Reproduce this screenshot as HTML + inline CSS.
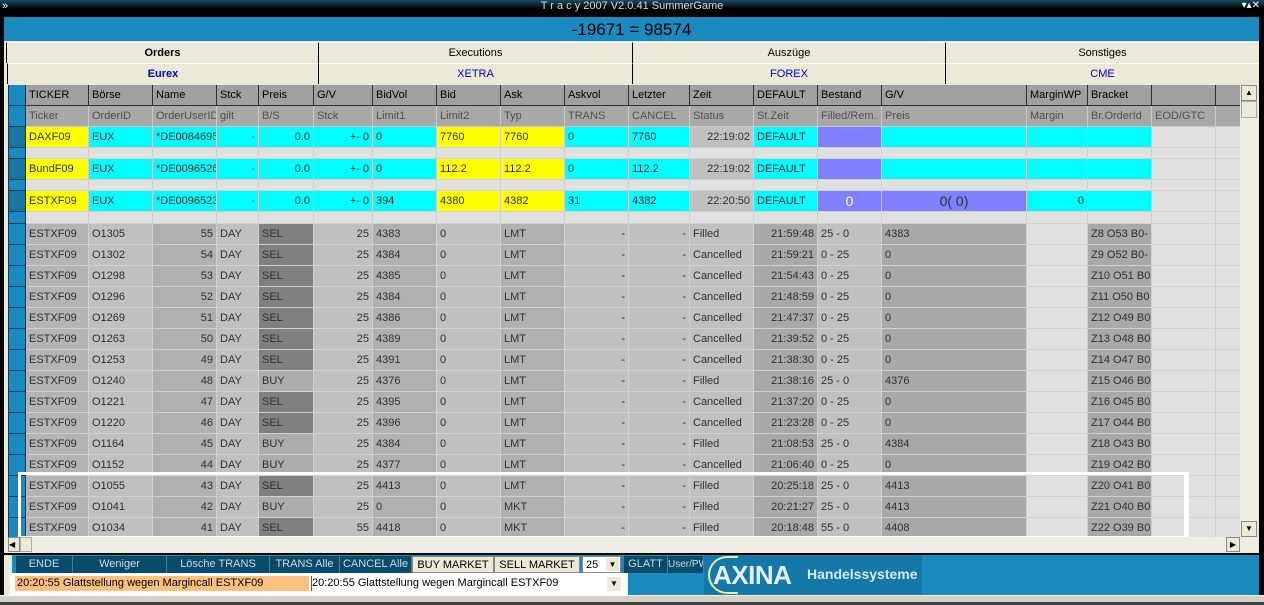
<!DOCTYPE html>
<html><head><meta charset="utf-8"><style>
*{box-sizing:border-box;margin:0;padding:0}
body{width:1264px;height:605px;overflow:hidden;background:#d4d0c8;font-family:"Liberation Sans",sans-serif;font-size:11px;position:relative}
.abs{position:absolute}
#title{left:0;top:0;width:1264px;height:15px;background:linear-gradient(#1a4a60,#000 60%,#000);color:#d8d8d8;text-align:center;font-size:11px;line-height:13px}
#frame{left:0;top:14px;width:1264px;height:581px;background:#000}
#blue{left:4px;top:17px;width:1255px;height:24px;background:#1a8ac0;text-align:center;font-size:17px;line-height:26px;color:#000}
.tabrow{height:21px;background:#ece9d8;display:flex}
.tabrow div{border-left:1px solid #000;text-align:center;line-height:20px;border-top:1px solid #fff}
#grid{left:8px;top:85px;width:1232px;height:452px;overflow:hidden;background:#e0e0e0}
table{border-collapse:collapse;table-layout:fixed;width:1232px}
td{border:1px solid #d0d0d0;height:21px;padding:0 3px;white-space:nowrap;overflow:hidden;color:#303030}
tr.h1 td{background:#a0a0a0;color:#000;border:1px solid #303030;border-top:none;height:20px}
tr.h2 td{background:#a8a8a8;color:#505050;border-color:#c8c8c8}
tr.b td{height:11px;background:#e0e0e0}
tr.c td{background:#00ffff}
tr.c td.y{background:#ffff00}
tr.c td.p{background:#8080ff}
tr.c td.gr{background:#c0c0c0}
tr.c td.e{background:#e0e0e0}
.r{text-align:right}
tr.g td{background:#c0c0c0}
tr.g td:nth-child(2){background:#b4b4b4}
tr.g td:nth-child(4),tr.g td:nth-child(8),tr.g td:nth-child(10){background:#b0b0b0;}
tr.g td:nth-child(4),tr.g td:nth-child(7),tr.g td:nth-child(11),tr.g td:nth-child(12),tr.g td:nth-child(14){text-align:right}
tr.g td:nth-child(14),tr.g td:nth-child(16),tr.g td:nth-child(18){background:#a8a8a8}
tr.g td:nth-child(17),tr.g td:nth-child(19),tr.g td:nth-child(20){background:#e0e0e0}
tr.g td.s{background:#808080}
tr.g td.bu{background:#acacac}
table tr td:first-child{background:#1a8ac0;border-color:#0a3a5a;padding:0}
table tr.c td:first-child{background:#1a75a0}
.btn{position:absolute;top:556px;height:17px;background:#0a4a6a;color:#c8dce8;text-align:center;line-height:17px;border-right:1px solid #4a7a9a;white-space:nowrap;overflow:hidden}
.lbtn{background:#ece9d8;color:#000;border:1px solid #888}
</style></head><body>
<div id="frame" class="abs"></div>
<div id="title" class="abs">T r a c y 2007 V2.0.41 SummerGame</div>
<div class="abs" style="left:2px;top:0;color:#fff;font-size:11px">»</div>
<div class="abs" style="right:4px;top:0;color:#fff;font-size:10px">▾▴✕</div>
<div id="blue" class="abs">-19671 = 98574</div>
<div class="abs" style="left:4px;top:41px;width:1255px;height:554px;background:#ece9d8"></div>
<div class="abs tabrow" style="left:6px;top:42px;width:1253px">
<div style="width:312px;font-weight:bold">Orders</div><div style="width:314px">Executions</div><div style="width:313px">Auszüge</div><div style="width:314px">Sonstiges</div></div>
<div class="abs tabrow" style="left:7px;top:63px;width:1252px;color:#0000c0">
<div style="width:311px;font-weight:bold">Eurex</div><div style="width:314px">XETRA</div><div style="width:313px">FOREX</div><div style="width:314px">CME</div></div>
<div id="grid" class="abs"><table>
<colgroup><col style="width:17px"><col style="width:63px"><col style="width:64px"><col style="width:64px"><col style="width:42px"><col style="width:55px"><col style="width:59px"><col style="width:64px"><col style="width:64px"><col style="width:64px"><col style="width:64px"><col style="width:61px"><col style="width:64px"><col style="width:64px"><col style="width:64px"><col style="width:145px"><col style="width:61px"><col style="width:64px"><col style="width:64px"><col style="width:25px"></colgroup>
<tr class="h1"><td></td><td>TICKER</td><td>Börse</td><td>Name</td><td>Stck</td><td>Preis</td><td>G/V</td><td>BidVol</td><td>Bid</td><td>Ask</td><td>Askvol</td><td>Letzter</td><td>Zeit</td><td>DEFAULT</td><td>Bestand</td><td>G/V</td><td>MarginWP</td><td>Bracket</td><td></td><td></td></tr>
<tr class="h2"><td></td><td>Ticker</td><td>OrderID</td><td>OrderUserID</td><td>gilt</td><td>B/S</td><td>Stck</td><td>Limit1</td><td>Limit2</td><td>Typ</td><td>TRANS</td><td>CANCEL</td><td>Status</td><td>St.Zeit</td><td>Filled/Rem.</td><td>Preis</td><td>Margin</td><td>Br.OrderId</td><td>EOD/GTC</td><td></td></tr>
<tr class="c"><td></td><td class="y">DAXF09</td><td>EUX</td><td>*DE0084695</td><td class="r">-</td><td class="r">0.0</td><td class="r">+- 0</td><td>0</td><td class="y">7760</td><td class="y">7760</td><td>0</td><td>7760</td><td class="gr r">22:19:02</td><td>DEFAULT</td><td class="p"></td><td></td><td></td><td></td><td class="e"></td><td class="e"></td></tr>
<tr class="b"><td></td><td></td><td></td><td></td><td></td><td></td><td></td><td></td><td></td><td></td><td></td><td></td><td></td><td></td><td></td><td></td><td></td><td></td><td></td><td></td></tr>
<tr class="c"><td></td><td class="y">BundF09</td><td>EUX</td><td>*DE0096526</td><td class="r">-</td><td class="r">0.0</td><td class="r">+- 0</td><td>0</td><td class="y">112.2</td><td class="y">112.2</td><td>0</td><td>112.2</td><td class="gr r">22:19:02</td><td>DEFAULT</td><td class="p"></td><td></td><td></td><td></td><td class="e"></td><td class="e"></td></tr>
<tr class="b"><td></td><td></td><td></td><td></td><td></td><td></td><td></td><td></td><td></td><td></td><td></td><td></td><td></td><td></td><td></td><td></td><td></td><td></td><td></td><td></td></tr>
<tr class="c"><td></td><td class="y">ESTXF09</td><td>EUX</td><td>*DE0096523</td><td class="r">-</td><td class="r">0.0</td><td class="r">+- 0</td><td>394</td><td class="y">4380</td><td class="y">4382</td><td>31</td><td>4382</td><td class="gr r">22:20:50</td><td>DEFAULT</td><td class="p" style="text-align:center;color:#fff;font-size:14px">0</td><td class="p" style="text-align:center;font-size:14px">0( 0)</td><td class="r">0</td><td></td><td class="e"></td><td class="e"></td></tr>
<tr class="b"><td style="height:12px"></td><td></td><td></td><td></td><td></td><td></td><td></td><td></td><td></td><td></td><td></td><td></td><td></td><td></td><td></td><td></td><td></td><td></td><td></td><td></td></tr>
<tr class="g"><td></td><td>ESTXF09</td><td>O1305</td><td>55</td><td>DAY</td><td class="s">SEL</td><td>25</td><td>4383</td><td>0</td><td>LMT</td><td>-</td><td>-</td><td>Filled</td><td>21:59:48</td><td>25 - 0</td><td>4383</td><td></td><td>Z8 O53 B0-</td><td></td><td></td></tr>
<tr class="g"><td></td><td>ESTXF09</td><td>O1302</td><td>54</td><td>DAY</td><td class="s">SEL</td><td>25</td><td>4384</td><td>0</td><td>LMT</td><td>-</td><td>-</td><td>Cancelled</td><td>21:59:21</td><td>0 - 25</td><td>0</td><td></td><td>Z9 O52 B0-</td><td></td><td></td></tr>
<tr class="g"><td></td><td>ESTXF09</td><td>O1298</td><td>53</td><td>DAY</td><td class="s">SEL</td><td>25</td><td>4385</td><td>0</td><td>LMT</td><td>-</td><td>-</td><td>Cancelled</td><td>21:54:43</td><td>0 - 25</td><td>0</td><td></td><td>Z10 O51 B0</td><td></td><td></td></tr>
<tr class="g"><td></td><td>ESTXF09</td><td>O1296</td><td>52</td><td>DAY</td><td class="s">SEL</td><td>25</td><td>4384</td><td>0</td><td>LMT</td><td>-</td><td>-</td><td>Cancelled</td><td>21:48:59</td><td>0 - 25</td><td>0</td><td></td><td>Z11 O50 B0</td><td></td><td></td></tr>
<tr class="g"><td></td><td>ESTXF09</td><td>O1269</td><td>51</td><td>DAY</td><td class="s">SEL</td><td>25</td><td>4386</td><td>0</td><td>LMT</td><td>-</td><td>-</td><td>Cancelled</td><td>21:47:37</td><td>0 - 25</td><td>0</td><td></td><td>Z12 O49 B0</td><td></td><td></td></tr>
<tr class="g"><td></td><td>ESTXF09</td><td>O1263</td><td>50</td><td>DAY</td><td class="s">SEL</td><td>25</td><td>4389</td><td>0</td><td>LMT</td><td>-</td><td>-</td><td>Cancelled</td><td>21:39:52</td><td>0 - 25</td><td>0</td><td></td><td>Z13 O48 B0</td><td></td><td></td></tr>
<tr class="g"><td></td><td>ESTXF09</td><td>O1253</td><td>49</td><td>DAY</td><td class="s">SEL</td><td>25</td><td>4391</td><td>0</td><td>LMT</td><td>-</td><td>-</td><td>Cancelled</td><td>21:38:30</td><td>0 - 25</td><td>0</td><td></td><td>Z14 O47 B0</td><td></td><td></td></tr>
<tr class="g"><td></td><td>ESTXF09</td><td>O1240</td><td>48</td><td>DAY</td><td class="bu">BUY</td><td>25</td><td>4376</td><td>0</td><td>LMT</td><td>-</td><td>-</td><td>Filled</td><td>21:38:16</td><td>25 - 0</td><td>4376</td><td></td><td>Z15 O46 B0</td><td></td><td></td></tr>
<tr class="g"><td></td><td>ESTXF09</td><td>O1221</td><td>47</td><td>DAY</td><td class="s">SEL</td><td>25</td><td>4395</td><td>0</td><td>LMT</td><td>-</td><td>-</td><td>Cancelled</td><td>21:37:20</td><td>0 - 25</td><td>0</td><td></td><td>Z16 O45 B0</td><td></td><td></td></tr>
<tr class="g"><td></td><td>ESTXF09</td><td>O1220</td><td>46</td><td>DAY</td><td class="s">SEL</td><td>25</td><td>4396</td><td>0</td><td>LMT</td><td>-</td><td>-</td><td>Cancelled</td><td>21:23:28</td><td>0 - 25</td><td>0</td><td></td><td>Z17 O44 B0</td><td></td><td></td></tr>
<tr class="g"><td></td><td>ESTXF09</td><td>O1164</td><td>45</td><td>DAY</td><td class="bu">BUY</td><td>25</td><td>4384</td><td>0</td><td>LMT</td><td>-</td><td>-</td><td>Filled</td><td>21:08:53</td><td>25 - 0</td><td>4384</td><td></td><td>Z18 O43 B0</td><td></td><td></td></tr>
<tr class="g"><td></td><td>ESTXF09</td><td>O1152</td><td>44</td><td>DAY</td><td class="bu">BUY</td><td>25</td><td>4377</td><td>0</td><td>LMT</td><td>-</td><td>-</td><td>Cancelled</td><td>21:06:40</td><td>0 - 25</td><td>0</td><td></td><td>Z19 O42 B0</td><td></td><td></td></tr>
<tr class="g"><td></td><td>ESTXF09</td><td>O1055</td><td>43</td><td>DAY</td><td class="s">SEL</td><td>25</td><td>4413</td><td>0</td><td>LMT</td><td>-</td><td>-</td><td>Filled</td><td>20:25:18</td><td>25 - 0</td><td>4413</td><td></td><td>Z20 O41 B0</td><td></td><td></td></tr>
<tr class="g"><td></td><td>ESTXF09</td><td>O1041</td><td>42</td><td>DAY</td><td class="bu">BUY</td><td>25</td><td>0</td><td>0</td><td>MKT</td><td>-</td><td>-</td><td>Filled</td><td>20:21:27</td><td>25 - 0</td><td>4413</td><td></td><td>Z21 O40 B0</td><td></td><td></td></tr>
<tr class="g"><td></td><td>ESTXF09</td><td>O1034</td><td>41</td><td>DAY</td><td class="s">SEL</td><td>55</td><td>4418</td><td>0</td><td>MKT</td><td>-</td><td>-</td><td>Filled</td><td>20:18:48</td><td>55 - 0</td><td>4408</td><td></td><td>Z22 O39 B0</td><td></td><td></td></tr>
</table></div>
<div class="abs" style="left:18px;top:472px;width:1171px;height:67px;border:3px solid #fff;border-right-width:5px"></div>
<div class="abs" style="left:1240px;top:85px;width:17px;height:452px;background:#f0eee4"></div>
<div class="abs" style="left:1241px;top:85px;width:16px;height:16px;background:#ece9d8;border:1px solid #888;font-size:8px;text-align:center;line-height:14px">▲</div>
<div class="abs" style="left:1241px;top:101px;width:16px;height:17px;background:#ece9d8;border:1px solid #aaa"></div>
<div class="abs" style="left:1241px;top:521px;width:16px;height:16px;background:#ece9d8;border:1px solid #888;font-size:8px;text-align:center;line-height:14px">▼</div>
<div class="abs" style="left:8px;top:537px;width:1249px;height:16px;background:#f0eee4"></div>
<div class="abs" style="left:8px;top:537px;width:12px;height:15px;background:#ece9d8;border:1px solid #888;font-size:8px;line-height:13px">◀</div>
<div class="abs" style="left:20px;top:537px;width:12px;height:15px;background:#ece9d8;border:1px solid #aaa"></div>
<div class="abs" style="left:1226px;top:537px;width:14px;height:15px;background:#ece9d8;border:1px solid #888;font-size:8px;line-height:13px;text-align:center">▶</div>
<div class="abs" style="left:4px;top:553px;width:1255px;height:2px;background:#000"></div>
<div class="abs" style="left:12px;top:555px;width:1247px;height:40px;background:#1a8ac0"></div>
<div class="btn" style="left:16px;width:57px">ENDE</div>
<div class="btn" style="left:73px;width:94px">Weniger</div>
<div class="btn" style="left:167px;width:103px">Lösche TRANS</div>
<div class="btn" style="left:270px;width:70px">TRANS Alle</div>
<div class="btn" style="left:340px;width:72px">CANCEL Alle</div>
<div class="btn lbtn" style="left:412px;width:82px">BUY MARKET</div>
<div class="btn lbtn" style="left:494px;width:86px">SELL MARKET</div>
<div class="btn" style="left:582px;width:39px;background:#fff;color:#000;text-align:left;padding-left:3px;border:1px solid #888">25<span style="position:absolute;right:1px;top:1px;width:13px;height:13px;background:#ece9d8;font-size:8px;text-align:center;line-height:13px">▼</span></div>
<div class="btn" style="left:624px;width:44px;">GLATT</div>
<div class="btn" style="left:668px;width:36px;font-size:10px">User/PW</div>
<div class="abs" style="left:10px;top:573px;width:618px;height:22px;background:#fff"></div>
<div class="abs" style="left:15px;top:576px;width:294px;height:15px;background:#ffc080;line-height:15px;color:#000;padding-left:2px;white-space:nowrap;overflow:hidden">20:20:55 Glattstellung wegen Margincall ESTXF09</div>
<div class="abs" style="left:311px;top:576px;width:295px;height:15px;line-height:15px;color:#000;border-left:1px solid #555;white-space:nowrap;overflow:hidden">20:20:55 Glattstellung wegen Margincall ESTXF09</div>
<div class="abs" style="left:607px;top:577px;width:14px;height:14px;background:#ece9d8;font-size:8px;text-align:center;line-height:14px">▼</div>
<div class="abs" style="left:704px;top:555px;width:218px;height:40px;background:#1478a8"></div>
<div class="abs" style="left:708px;top:556px;width:30px;height:38px;border:2px solid #e8f0a0;border-right:none;border-radius:30px 0 0 30px"></div>
<div class="abs" style="left:713px;top:559px;font-size:26px;font-weight:bold;color:#e8eef4;line-height:32px;letter-spacing:-0.5px">AXINA</div>
<div class="abs" style="left:807px;top:566px;font-size:14px;font-weight:bold;color:#dde8f0">Handelssysteme</div>
<div class="abs" style="left:0;top:595px;width:1264px;height:10px;background:#d4d0c8;border-top:1px solid #fff"></div>
<div class="abs" style="left:0;top:602px;width:1264px;height:3px;background:#404040"></div>
</body></html>
